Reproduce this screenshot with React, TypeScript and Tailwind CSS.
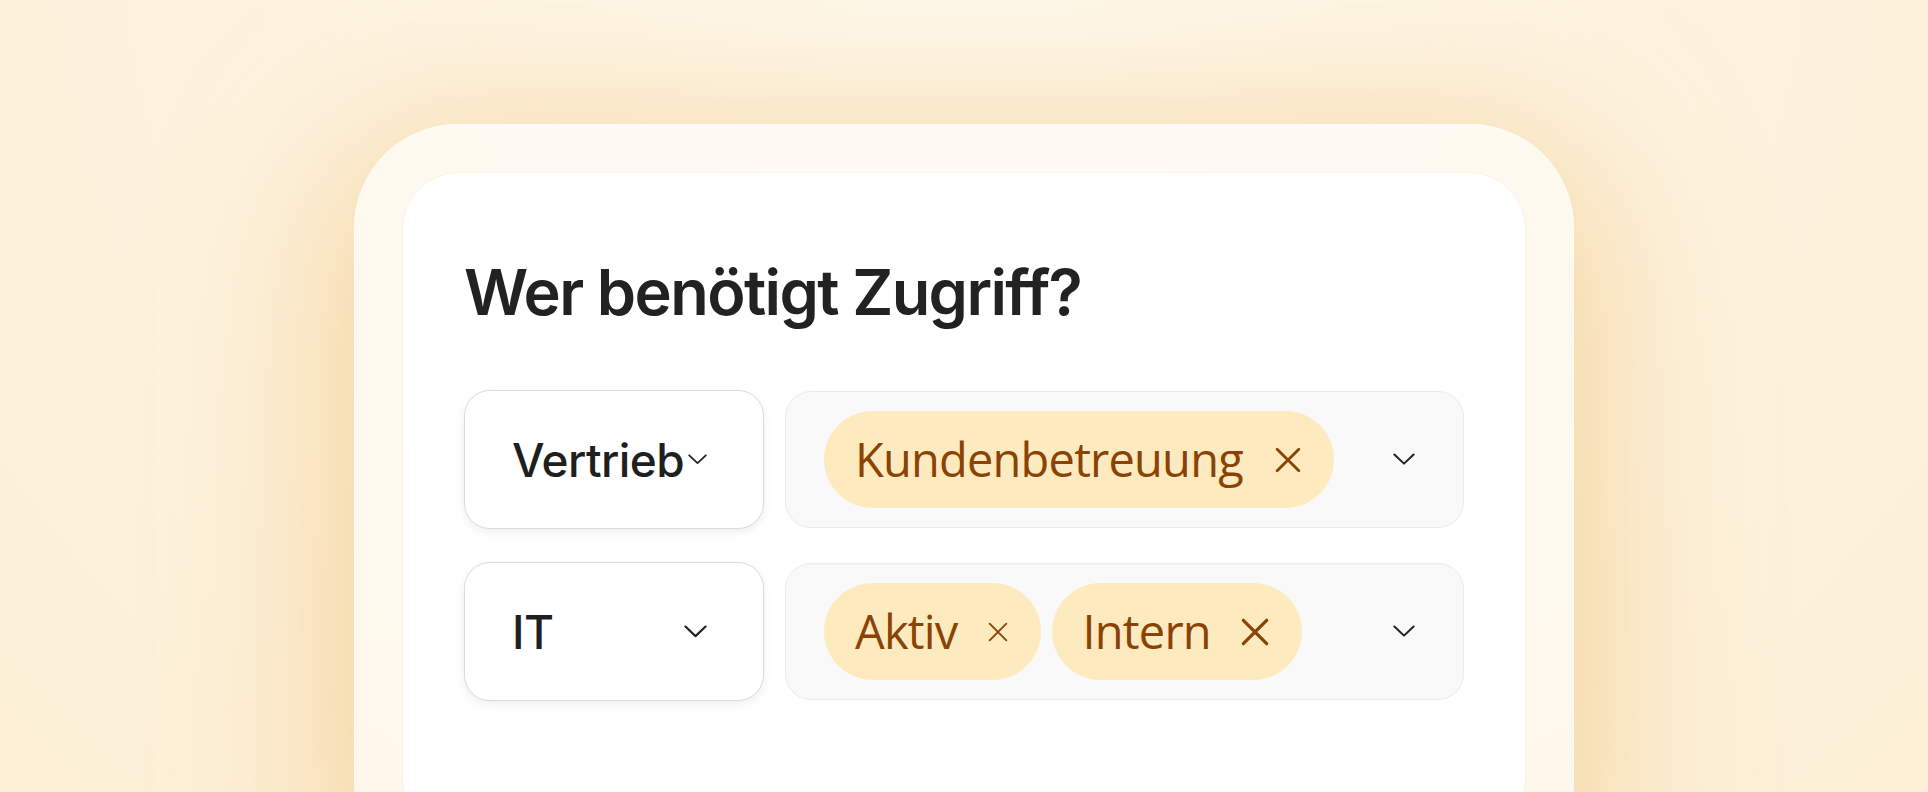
import React from 'react'

type Tag = { label: string; gap: number; x: number; stroke: number }

const rows: { team: string; chevron: number; tags: Tag[] }[] = [
  {
    team: 'Vertrieb',
    chevron: 19,
    tags: [{ label: 'Kundenbetreuung', gap: 32, x: 26, stroke: 2.6 }],
  },
  {
    team: 'IT',
    chevron: 23,
    tags: [
      { label: 'Aktiv', gap: 30, x: 20, stroke: 2.2 },
      { label: 'Intern', gap: 30, x: 28, stroke: 2.8 },
    ],
  },
]

function Chevron({ size }: { size: number }) {
  return (
    <svg
      width={size}
      height={size * 0.55}
      viewBox="0 0 24 13"
      fill="none"
      stroke="#222"
      strokeWidth={2.2}
      strokeLinecap="round"
      strokeLinejoin="round"
      className="shrink-0"
    >
      <path d="M1.5 1.5 12 11.5 22.5 1.5" />
    </svg>
  )
}

function Cross({ size, stroke }: { size: number; stroke: number }) {
  return (
    <svg width={size} height={size} viewBox="0 0 24 24" fill="none" stroke="#8a4304" strokeWidth={stroke} strokeLinecap="round" className="shrink-0">
      <path d="M2 2 22 22M22 2 2 22" />
    </svg>
  )
}

function Pill({ tag }: { tag: Tag }) {
  return (
    <div className="flex h-[97px] items-center rounded-full bg-[#feeabf] pl-[31px] pr-[33px]">
      <span className="font-['Open_Sans',sans-serif] text-[47px] leading-none tracking-[-0.8px] text-[#8a4304]">{tag.label}</span>
      <div style={{ width: tag.gap }} />
      <Cross size={tag.x} stroke={tag.stroke} />
    </div>
  )
}

export default function App() {
  return (
    <div className="flex h-[792px] w-full justify-center overflow-hidden bg-[radial-gradient(ellipse_at_50%_-10%,#fef9ec_0%,#fdf3df_50%,#fcefd6_100%)] pt-[124px]">
      <div className="h-[760px] w-[1220px] shrink-0 rounded-[104px] border border-white/60 bg-white/50 p-[48px] shadow-[0_30px_170px_10px_rgba(238,185,100,0.6)]">
        <div className="h-full rounded-[56px] bg-white px-[61px] pt-[88px] shadow-[0_0_2px_rgba(160,120,60,0.12)]">
          <h1 className="font-['Inter',sans-serif] text-[63px] font-semibold leading-none tracking-[-1.6px] text-[#222]">
            Wer benötigt Zugriff?
          </h1>
          <div className="mt-[66px] flex flex-col gap-[33px]">
            {rows.map((row) => (
              <div key={row.team} className="flex items-center gap-[21px]">
                <div className="flex h-[139px] w-[300px] shrink-0 items-center justify-between rounded-[26px] border-[1.5px] border-[#dcdcdc] bg-white pl-[47px] pr-[56px] shadow-[0_3px_8px_rgba(0,0,0,0.07)]">
                  <span className="font-['Inter',sans-serif] text-[46px] font-medium leading-none tracking-[-0.6px] text-[#1f1f1f]">
                    {row.team}
                  </span>
                  <Chevron size={row.chevron} />
                </div>
                <div className="flex h-[137px] flex-1 items-center justify-between rounded-[26px] border-[1.5px] border-[#ebebeb] bg-[#f9f9f9] pl-[38px] pr-[48px]">
                  <div className="flex items-center gap-[11px]">
                    {row.tags.map((t) => (
                      <Pill key={t.label} tag={t} />
                    ))}
                  </div>
                  <Chevron size={22} />
                </div>
              </div>
            ))}
          </div>
        </div>
      </div>
    </div>
  )
}
